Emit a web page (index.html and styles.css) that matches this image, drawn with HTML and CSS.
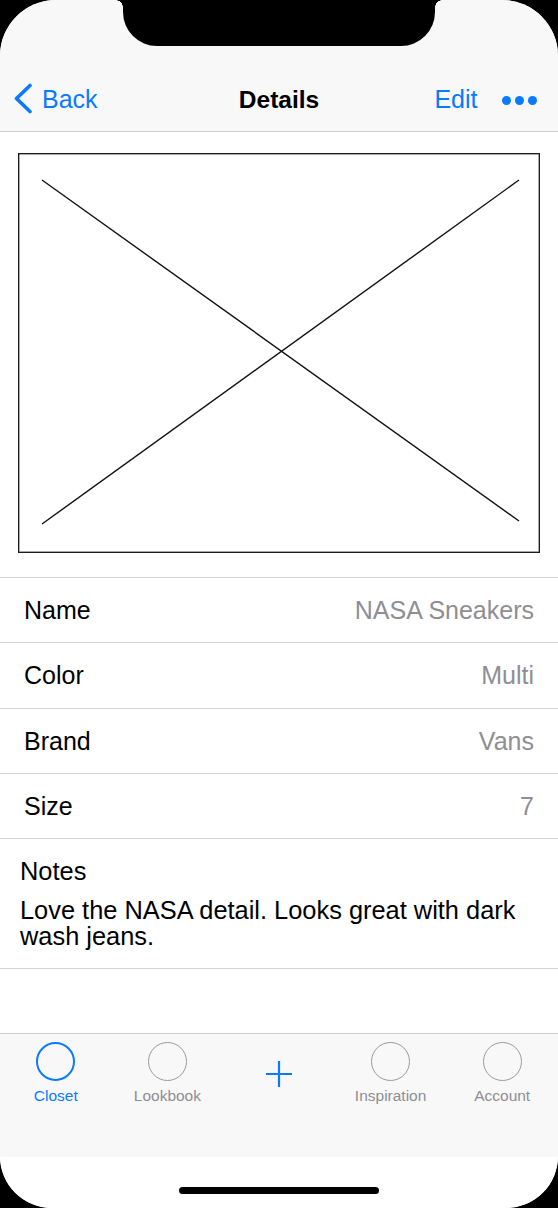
FILE: index.html
```html
<!DOCTYPE html>
<html lang="en">
<head>
<meta charset="utf-8">
<title>Details</title>
<link rel="stylesheet" href="styles.css">
</head>
<body>
<div class="phone">
  <div class="screen">
    <div class="notch"></div>
    <header class="navbar">
      <a class="nav-back">
        <svg class="chev" width="20" height="31" viewBox="0 0 20 31"><path d="M17 2.5 L3.5 15.5 L17 28.5" fill="none" stroke="#0a7aff" stroke-width="3.6" stroke-linecap="round" stroke-linejoin="round"/></svg>
        <span>Back</span>
      </a>
      <h1 class="nav-title">Details</h1>
      <div class="nav-right">
        <span class="nav-edit">Edit</span>
        <span class="dots"><i></i><i></i><i></i></span>
      </div>
    </header>

    <main class="content">
      <section class="photo-wrap">
        <div class="photo">
          <svg width="520" height="398" viewBox="0 0 520 398" preserveAspectRatio="none">
            <line x1="23" y1="26" x2="500" y2="367" stroke="#111" stroke-width="1.4"/>
            <line x1="23" y1="370" x2="500" y2="26" stroke="#111" stroke-width="1.4"/>
          </svg>
        </div>
      </section>

      <ul class="fields">
        <li class="field"><span class="label">Name</span><span class="value">NASA Sneakers</span></li>
        <li class="field"><span class="label">Color</span><span class="value">Multi</span></li>
        <li class="field"><span class="label">Brand</span><span class="value">Vans</span></li>
        <li class="field"><span class="label">Size</span><span class="value">7</span></li>
      </ul>

      <section class="notes">
        <div class="notes-label">Notes</div>
        <p class="notes-text">Love the NASA detail. Looks great with dark wash jeans.</p>
      </section>
    </main>

    <nav class="tabbar">
      <div class="tab active"><span class="ring"></span><span class="tab-label">Closet</span></div>
      <div class="tab"><span class="ring"></span><span class="tab-label">Lookbook</span></div>
      <div class="tab add">
        <svg width="28" height="28" viewBox="0 0 28 28"><path d="M14 1 V27 M1 14 H27" stroke="#0a7aff" stroke-width="2.2" fill="none"/></svg>
      </div>
      <div class="tab"><span class="ring"></span><span class="tab-label">Inspiration</span></div>
      <div class="tab"><span class="ring"></span><span class="tab-label">Account</span></div>
    </nav>
    <div class="home-area"><span class="home-indicator"></span></div>
  </div>
</div>
</body>
</html>
```
FILE: styles.css
```css
* { box-sizing: border-box; }
html, body { margin: 0; padding: 0; background: #000; }
body { width: 558px; height: 1208px; overflow: hidden; font-family: "Liberation Sans", Arial, sans-serif; }

.phone { width: 558px; height: 1208px; background: #000; }
.screen {
  position: relative;
  width: 558px; height: 1208px;
  background: #fff;
  border-radius: 56px 56px 52px 52px;
  overflow: hidden;
  display: flex; flex-direction: column;
}

.notch {
  position: absolute; top: 0; left: 123px;
  width: 312px; height: 46px;
  background: #000;
  border-radius: 0 0 34px 34px;
  z-index: 5;
}
.notch::before, .notch::after {
  content: ""; position: absolute; top: 0; width: 7px; height: 7px;
}
.notch::before { left: -7px; background: radial-gradient(circle at 0 100%, transparent 6.5px, #000 7px); }
.notch::after { right: -7px; background: radial-gradient(circle at 100% 100%, transparent 6.5px, #000 7px); }

.navbar {
  height: 132px;
  background: #f8f8f8;
  border-bottom: 1px solid #cfcfd2;
  display: flex; align-items: center; justify-content: space-between;
  padding: 68px 21px 0 13px;
  position: relative;
  flex: none;
}
.nav-back { display: flex; align-items: center; gap: 9px; color: #0a7aff; font-size: 25px; }
.chev { display: block; margin-top: -3px; }
.nav-title {
  position: absolute; left: 0; right: 0; top: 69px; bottom: 0;
  margin: 0; display: flex; align-items: center; justify-content: center;
  font-size: 24.5px; font-weight: bold; color: #000;
  pointer-events: none;
}
.nav-right { display: flex; align-items: center; gap: 24px; }
.nav-edit { color: #0a7aff; font-size: 25px; }
.dots { display: flex; gap: 3.5px; margin-top: 2px; }
.dots i { width: 9.5px; height: 9.5px; border-radius: 50%; background: #0a7aff; display: block; }

.content { flex: 1; display: flex; flex-direction: column; }

.photo-wrap { padding: 21px 18px 24px; }
.photo {
  width: 522px; height: 400px;
  border: 1px solid #1c1c1c;
  box-shadow: inset 0 0 0 0.5px #555;
}
.photo svg { display: block; }

.fields { list-style: none; margin: 0; padding: 0; border-top: 1px solid #d4d4d6; }
.field {
  height: 65.25px;
  border-bottom: 1px solid #d4d4d6;
  display: flex; align-items: center; justify-content: space-between;
  padding: 1px 24px 0;
  font-size: 25px;
}
.label { color: #000; }
.value { color: #8e8e93; }

.notes { padding: 19px 20px 19px; border-bottom: 1px solid #d4d4d6; }
.notes-label { font-size: 25.4px; line-height: 26px; color: #000; }
.notes-text { margin: 13px 0 0; font-size: 25.4px; line-height: 26px; color: #000; }

.tabbar {
  flex: none;
  height: 124px;
  background: #f8f8f8;
  border-top: 1px solid #cfcfd2;
  display: grid; grid-template-columns: repeat(5, 1fr);
  align-items: start;
  padding-top: 8px;
}
.tab { display: flex; flex-direction: column; align-items: center; gap: 6px; }
.ring { width: 39px; height: 39px; border-radius: 50%; border: 1.6px solid #9a9a9e; display: block; }
.tab-label { font-size: 15.5px; color: #8e8e93; line-height: 18px; }
.tab.active .ring { border: 2px solid #0a7aff; }
.tab.active .tab-label { color: #0a7aff; }
.tab.add { padding-top: 18px; }
.tab.add svg { display: block; }

.home-area {
  flex: none; height: 51px; background: #fff;
  display: flex; justify-content: center; padding-top: 30px;
}
.home-indicator { width: 200px; height: 7px; border-radius: 4px; background: #000; display: block; }
```
